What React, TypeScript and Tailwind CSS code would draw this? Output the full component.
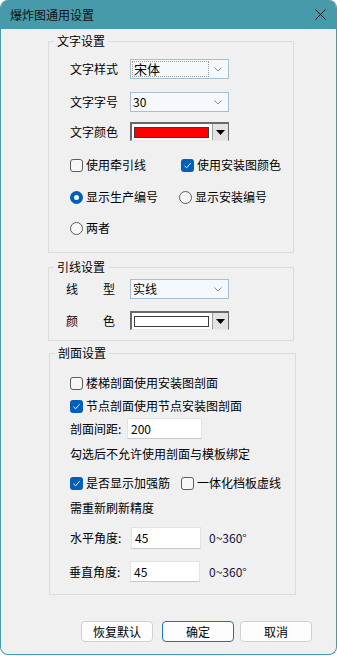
import React from "react";

const font = { fontFamily: '"Noto Sans CJK SC", "Noto Sans", sans-serif' };

function Checkbox({ checked }: { checked?: boolean }) {
  if (checked) {
    return (
      <span className="flex h-[13px] w-[13px] shrink-0 items-center justify-center rounded-[3px] bg-[#005fb8]">
        <svg width="9" height="9" viewBox="0 0 9 9">
          <polyline points="1.5,4.8 3.6,6.8 7.6,2.2" fill="none" stroke="white" strokeWidth="1" />
        </svg>
      </span>
    );
  }
  return <span className="block h-[13px] w-[13px] shrink-0 rounded-[3px] border border-[#5c5c5c] bg-[#f7f7f7]" />;
}

function Radio({ checked }: { checked?: boolean }) {
  if (checked) {
    return (
      <span className="flex h-[13px] w-[13px] shrink-0 items-center justify-center rounded-full bg-[#005fb8]">
        <span className="block h-[5px] w-[5px] rounded-full bg-white" />
      </span>
    );
  }
  return <span className="block h-[13px] w-[13px] shrink-0 rounded-full border border-[#5c5c5c] bg-[#f7f7f7]" />;
}

function Chevron() {
  return (
    <svg width="8" height="5" viewBox="0 0 8 5" className="mr-[6px]">
      <polyline points="0.5,0.5 4,4 7.5,0.5" fill="none" stroke="#8a8a8a" strokeWidth="1" />
    </svg>
  );
}

function Combo({ value, focus }: { value: string; focus?: boolean }) {
  return (
    <div className="flex h-[20px] w-[99px] items-center justify-between border border-[#a7bfd4] bg-[#f5f9fc]">
      {focus ? (
        <div className="ml-[1px] flex h-[16px] w-[77px] items-center border border-dotted border-[#9a9a9a] pl-[1px] text-[13px] leading-[16px]">
          {value}
        </div>
      ) : (
        <div className="pl-[2px] text-[12px] leading-[16px]">{value}</div>
      )}
      <Chevron />
    </div>
  );
}

function ColorPicker({ color }: { color: string }) {
  return (
    <div className="flex h-[19px] w-[99px] border-l-2 border-t-2 border-b border-r border-l-[#6a6a6a] border-t-[#6a6a6a] border-b-[#e8e8e8] border-r-[#6a6a6a] bg-white">
      <div className="flex flex-1 items-center pl-[2px] pr-[3px]">
        <div className="h-[11px] w-full border border-[#3c3c3c]" style={{ backgroundColor: color }} />
      </div>
      <div className="flex w-[16px] items-center justify-center border-l border-[#a0a0a0] bg-[#e3e3e3]">
        <svg width="9" height="5" viewBox="0 0 9 5">
          <polygon points="0,0 9,0 4.5,5" fill="#000" />
        </svg>
      </div>
    </div>
  );
}

function TextInput({ value, w, h, pl }: { value: string; w: string; h: string; pl: string }) {
  return (
    <div className={`flex items-center border border-[#e3e3e3] border-b-[#c8c8c8] bg-white text-[12px] leading-[14px] ${w} ${h} ${pl}`}>
      {value}
    </div>
  );
}

function Legend({ text }: { text: string }) {
  return <legend className="ml-[5px] px-[3px] text-[12px] leading-[14px] text-black">{text}</legend>;
}

function Btn({ label, primary }: { label: string; primary?: boolean }) {
  return (
    <div
      className={`flex h-[21px] w-[72px] items-center justify-center rounded-[4px] bg-[#fdfdfd] text-[12px] ${
        primary ? "border border-[#1f6fc0]" : "border border-[#d0d0d0]"
      }`}
    >
      {label}
    </div>
  );
}

export default function App() {
  return (
    <div className="bg-white" style={font}>
      <div className="flex h-[655px] w-[337px] flex-col overflow-hidden rounded-t-[8px] rounded-b-[8px] border-x border-b border-[#479aa9] bg-[#f0f0f0] text-black">
        {/* title bar */}
        <div className="flex h-[29px] shrink-0 items-center justify-between bg-[#479aa9] pl-[9px] pr-[10px]">
          <span className="text-[12px] leading-[14px] text-[#111]">爆炸图通用设置</span>
          <svg width="11" height="11" viewBox="0 0 11 11">
            <line x1="0.5" y1="0.5" x2="10.5" y2="10.5" stroke="#111" strokeWidth="1" />
            <line x1="10.5" y1="0.5" x2="0.5" y2="10.5" stroke="#111" strokeWidth="1" />
          </svg>
        </div>

        {/* group 1 */}
        <fieldset className="ml-[47px] mt-[5px] w-[246px] border border-[#dcdcdc] px-0 pb-[16px]">
          <Legend text="文字设置" />
          <div className="flex flex-col pl-[21px] pt-[11px] text-[12px] leading-[16px]">
            <div className="flex h-[20px] items-center">
              <span className="w-[60px]">文字样式</span>
              <Combo value="宋体" focus />
            </div>
            <div className="mt-[13px] flex h-[20px] items-center">
              <span className="w-[60px]">文字字号</span>
              <Combo value="30" />
            </div>
            <div className="mt-[10px] flex h-[19px] items-center">
              <span className="w-[60px]">文字颜色</span>
              <ColorPicker color="#ff0000" />
            </div>
            <div className="mt-[16px] flex h-[16px] items-center">
              <div className="flex w-[111px] items-center gap-[3px]">
                <Checkbox />
                <span>使用牵引线</span>
              </div>
              <div className="flex items-center gap-[3px]">
                <Checkbox checked />
                <span>使用安装图颜色</span>
              </div>
            </div>
            <div className="mt-[16px] flex h-[16px] items-center">
              <div className="flex w-[109px] items-center gap-[3px]">
                <Radio checked />
                <span>显示生产编号</span>
              </div>
              <div className="flex items-center gap-[3px]">
                <Radio />
                <span>显示安装编号</span>
              </div>
            </div>
            <div className="mt-[15px] flex h-[16px] items-center gap-[3px]">
              <Radio />
              <span>两者</span>
            </div>
          </div>
        </fieldset>

        {/* group 2 */}
        <fieldset className="ml-[47px] mt-[7px] w-[246px] border border-[#dcdcdc] px-0 pb-[10px]">
          <Legend text="引线设置" />
          <div className="flex flex-col pl-[17px] pt-[5px] text-[12px] leading-[16px]">
            <div className="flex h-[20px] items-center">
              <span className="flex w-[64px]">
                <span className="w-[37px]">线</span>
                <span>型</span>
              </span>
              <Combo value="实线" />
            </div>
            <div className="mt-[12px] flex h-[19px] items-center">
              <span className="flex w-[64px]">
                <span className="w-[37px]">颜</span>
                <span>色</span>
              </span>
              <ColorPicker color="#ffffff" />
            </div>
          </div>
        </fieldset>

        {/* group 3 */}
        <fieldset className="ml-[48px] mt-[5px] w-[247px] border border-[#dcdcdc] px-0 pb-[12px]">
          <Legend text="剖面设置" />
          <div className="flex flex-col pl-[20px] pt-[15px] text-[12px] leading-[16px]">
            <div className="flex h-[16px] items-center gap-[3px]">
              <Checkbox />
              <span>楼梯剖面使用安装图剖面</span>
            </div>
            <div className="mt-[7px] flex h-[16px] items-center gap-[3px]">
              <Checkbox checked />
              <span>节点剖面使用节点安装图剖面</span>
            </div>
            <div className="mt-[4px] flex h-[21px] items-center">
              <span className="w-[57px]">剖面间距:</span>
              <TextInput value="200" w="w-[75px]" h="h-[21px]" pl="pl-[3px]" />
            </div>
            <div className="mt-[7px] flex h-[16px] items-center">
              <span>勾选后不允许使用剖面与模板绑定</span>
            </div>
            <div className="mt-[13px] flex h-[16px] items-center">
              <div className="flex w-[111px] items-center gap-[3px]">
                <Checkbox checked />
                <span>是否显示加强筋</span>
              </div>
              <div className="flex items-center gap-[3px]">
                <Checkbox />
                <span>一体化档板虚线</span>
              </div>
            </div>
            <div className="mt-[9px] flex h-[16px] items-center">
              <span>需重新刷新精度</span>
            </div>
            <div className="mt-[11px] flex h-[22px] items-center">
              <span className="w-[61px]">水平角度:</span>
              <TextInput value="45" w="w-[70px]" h="h-[22px]" pl="pl-[3px]" />
              <span className="ml-[8px] text-[#10103a]">0~360°</span>
            </div>
            <div className="mt-[12px] flex h-[21px] items-center">
              <span className="-ml-[1px] w-[61px]">垂直角度:</span>
              <TextInput value="45" w="w-[70px]" h="h-[21px]" pl="pl-[3px]" />
              <span className="ml-[9px] text-[#10103a]">0~360°</span>
            </div>
          </div>
        </fieldset>

        {/* buttons */}
        <div className="ml-[80px] mt-[26px] flex items-center">
          <Btn label="恢复默认" />
          <div className="ml-[9px]">
            <Btn label="确定" primary />
          </div>
          <div className="ml-[6px]">
            <Btn label="取消" />
          </div>
        </div>
      </div>
    </div>
  );
}
